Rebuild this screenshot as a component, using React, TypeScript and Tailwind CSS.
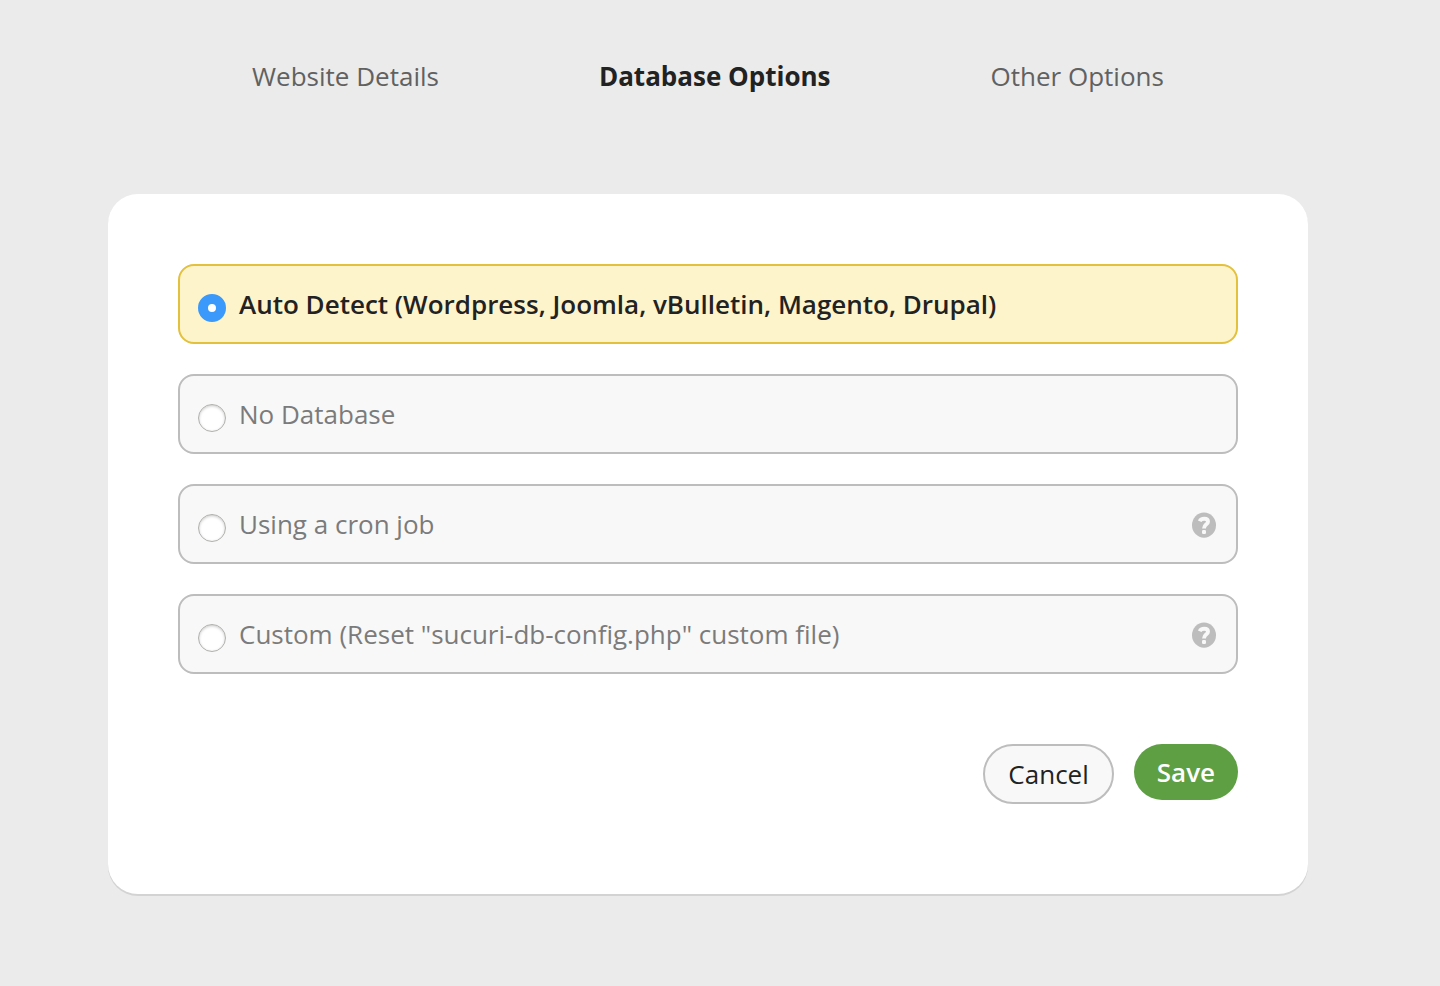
import { useState } from "react";

const tabs = [
  { label: "Website Details", active: false },
  { label: "Database Options", active: true },
  { label: "Other Options", active: false },
];

const options = [
  { id: "auto", label: "Auto Detect (Wordpress, Joomla, vBulletin, Magento, Drupal)", help: false },
  { id: "none", label: "No Database", help: false },
  { id: "cron", label: "Using a cron job", help: true },
  { id: "custom", label: 'Custom (Reset "sucuri-db-config.php" custom file)', help: true },
];

function HelpIcon() {
  return (
    <svg viewBox="0 0 24 28" className="h-7 w-6" aria-hidden="true">
      <ellipse cx="12" cy="15.200" rx="12" ry="12.600" fill="#bdbdbd" />
      <path
        d="M7.700 11.200C8.500 9.400 10.200 8.800 12.200 8.800C14.700 8.800 16 10 16 11.700C16 14.500 12 14.400 12 18.600"
        fill="none"
        stroke="#f8f8f8"
        strokeWidth="3.900"
      />
      <rect x="10" y="20" width="4" height="4" rx="1.200" fill="#f8f8f8" />
    </svg>
  );
}

export default function App() {
  const [selected, setSelected] = useState("auto");
  return (
    <div className="min-h-screen bg-[#ebebeb] pb-20 font-['Open_Sans',sans-serif] text-[26px] leading-9 text-[#222]">
      <nav className="flex justify-center gap-40 pt-[58px] pr-6">
        {tabs.map((tab) => (
          <a key={tab.label} href="#" className={tab.active ? "font-bold text-[#222]" : "text-[#616161]"}>
            {tab.label}
          </a>
        ))}
      </nav>
      <main className="mt-[100px] mr-[132px] ml-[108px]">
        <form onSubmit={(e) => e.preventDefault()} className="rounded-[30px] bg-white px-[70px] pt-[70px] pb-[90px] shadow-[0_2px_0_#d3d3d3]">
          <div className="flex flex-col gap-[30px]">
            {options.map((option) => {
              const on = selected === option.id;
              return (
                <div
                  key={option.id}
                  className={
                    "flex h-20 items-center rounded-2xl border-2 pr-5 pl-[18px] " +
                    (on ? "border-[#e3c03e] bg-[#fef4cb]" : "border-[#bdbdbd] bg-[#f8f8f8]")
                  }
                >
                  <input
                    type="radio"
                    name="database"
                    id={option.id}
                    checked={on}
                    onChange={() => setSelected(option.id)}
                    className="mt-2 mr-[13px] h-7 w-7 shrink-0 appearance-none rounded-full border border-[#b0b0ac] bg-white shadow-[inset_0_1px_3px_#c8c8c8] checked:border-[10px] checked:border-[#3b99fc] checked:shadow-none"
                  />
                  <label htmlFor={option.id} className={"grow " + (on ? "font-semibold text-[#222]" : "text-[#7b7b7b]")}>
                    {option.label}
                  </label>
                  {option.help && (
                    <button type="button" aria-label="Help">
                      <HelpIcon />
                    </button>
                  )}
                </div>
              );
            })}
          </div>
          <div className="mt-[70px] flex items-start justify-end gap-5">
            <button type="button" className="h-[60px] rounded-full border-2 border-[#bdbdbd] bg-[#f8f8f8] px-[23px]">
              Cancel
            </button>
            <button type="submit" className="h-14 rounded-full bg-[#5e9f43] px-[23px] font-semibold text-white">
              Save
            </button>
          </div>
        </form>
      </main>
    </div>
  );
}
